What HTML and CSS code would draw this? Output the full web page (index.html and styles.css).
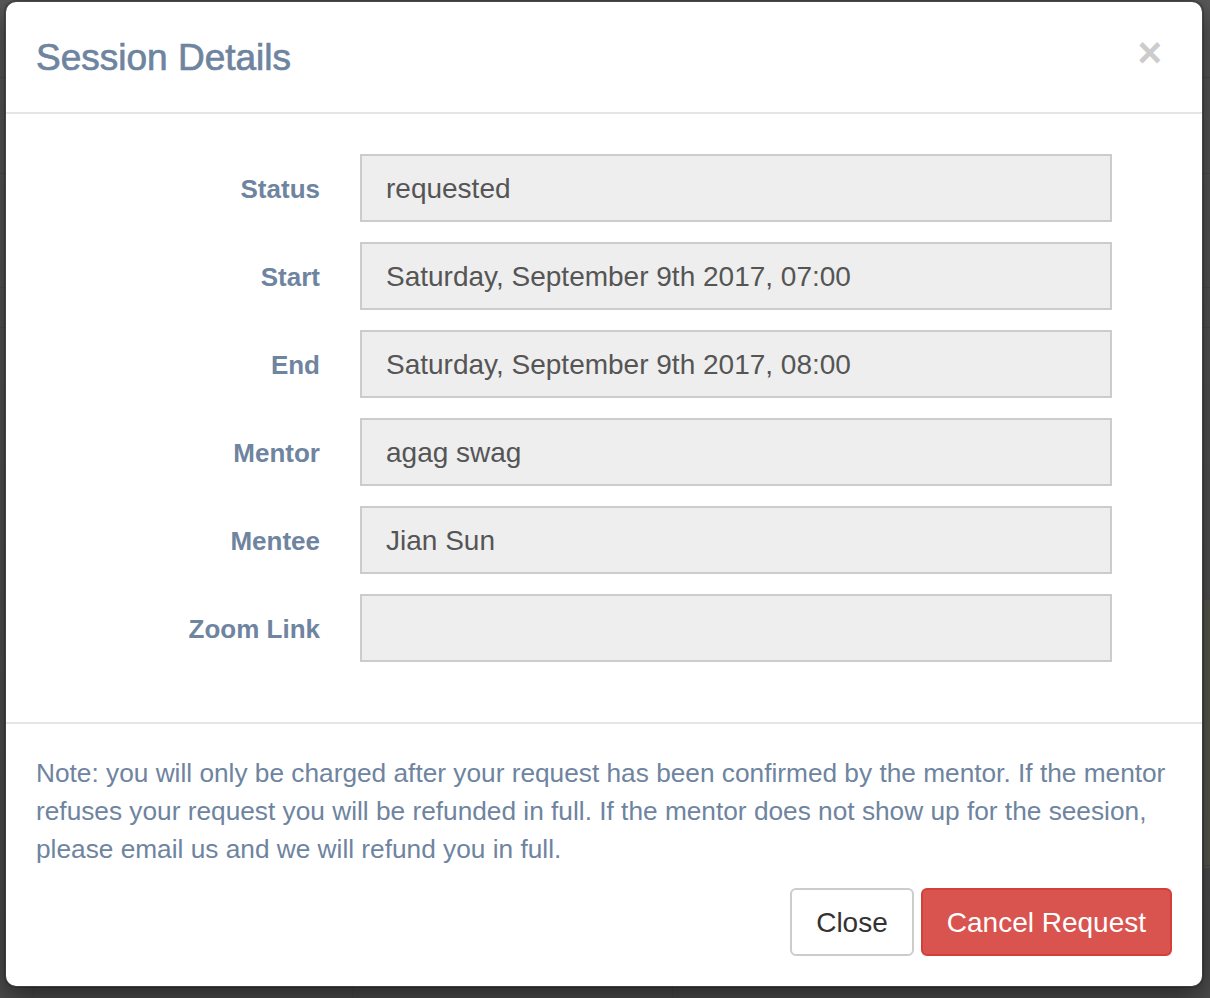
FILE: index.html
```html
<!DOCTYPE html>
<html lang="en">
<head>
<meta charset="utf-8">
<title>Session Details</title>
<link rel="stylesheet" href="styles.css">
</head>
<body>
<div class="modal">
  <div class="modal-header">
    <h4 class="modal-title">Session Details</h4>
    <span class="close">&times;</span>
  </div>
  <div class="modal-body">
    <form class="form">
      <label class="label">Status</label>
      <div class="input">requested</div>
      <label class="label">Start</label>
      <div class="input">Saturday, September 9th 2017, 07:00</div>
      <label class="label">End</label>
      <div class="input">Saturday, September 9th 2017, 08:00</div>
      <label class="label">Mentor</label>
      <div class="input">agag swag</div>
      <label class="label">Mentee</label>
      <div class="input">Jian Sun</div>
      <label class="label">Zoom Link</label>
      <div class="input"></div>
    </form>
  </div>
  <div class="modal-footer">
    <p class="note">Note: you will only be charged after your request has been confirmed by the mentor. If the mentor refuses your request you will be refunded in full. If the mentor does not show up for the seesion, please email us and we will refund you in full.</p>
    <div class="actions">
      <button class="btn btn-default" type="button">Close</button>
      <button class="btn btn-danger" type="button">Cancel Request</button>
    </div>
  </div>
</div>
</body>
</html>
```

FILE: styles.css
```css
* { box-sizing: border-box; }

html, body {
  margin: 0;
  padding: 0;
  height: 998px;
  overflow: hidden;
}

body {
  font-family: "Liberation Sans", Arial, Helvetica, sans-serif;
  background-color: #5a5a5a;
  background-image:
    linear-gradient(#505050, #505050),
    linear-gradient(#505050, #505050),
    linear-gradient(#505050, #505050),
    linear-gradient(#505050, #505050),
    linear-gradient(#505050, #505050),
    linear-gradient(#505050, #505050),
    linear-gradient(#4a4a4a, #4a4a4a),
    linear-gradient(#4a4a4a, #4a4a4a),
    linear-gradient(#4a4a4a, #4a4a4a),
    linear-gradient(#5b5b52, #5b5b52),
    linear-gradient(#5a5a5a, #4e4e4e);
  background-position:
    0 77px, 0 173px, 0 287px, 0 327px, 0 598px, 0 865px,
    33px 986px, 352px 986px, 672px 986px,
    1204px 600px, 0 0;
  background-size:
    100% 1px, 100% 1px, 100% 1px, 100% 1px, 100% 1px, 100% 1px,
    1px 12px, 1px 12px, 1px 12px,
    6px 268px, 100% 100%;
  background-repeat: no-repeat;
}

.modal {
  width: 1200px;
  margin-left: 4px;
  background: #fff;
  background-clip: padding-box;
  border: 2px solid rgba(0, 0, 0, 0.2);
  border-radius: 12px;
  box-shadow: 0 10px 30px rgba(0, 0, 0, 0.5);
}

.modal-header {
  display: flex;
  justify-content: space-between;
  align-items: flex-start;
  height: 112px;
  padding: 30px 40px 30px 30px;
  border-bottom: 2px solid #e5e5e5;
}

.modal-title {
  margin: 0;
  font-size: 37px;
  line-height: 52px;
  font-weight: 400;
  color: #6e849f;
  -webkit-text-stroke: 0.7px #6e849f;
}

.close {
  font-size: 42px;
  line-height: 42px;
  font-weight: 700;
  color: #cccccc;
  margin-top: 0;
}

.modal-body {
  padding: 40px 30px 60px 30px;
  border-bottom: 2px solid #e5e5e5;
}

.form {
  display: grid;
  grid-template-columns: 284px 752px;
  column-gap: 40px;
  row-gap: 20px;
  align-items: center;
  margin: 0;
}

.label {
  text-align: right;
  font-size: 26px;
  line-height: 38px;
  padding-top: 2px;
  font-weight: 700;
  color: #6e849f;
}

.input {
  height: 68px;
  padding: 13px 24px 11px 24px;
  font-size: 28px;
  line-height: 40px;
  color: #555555;
  background: #eeeeee;
  border: 2px solid #cccccc;
  border-radius: 0;
}

.modal-footer {
  padding: 30px 30px 30px 30px;
}

.note {
  margin: 0;
  font-size: 26.25px;
  line-height: 38px;
  color: #6e849f;
}

.actions {
  display: flex;
  justify-content: flex-end;
  gap: 7px;
  margin-top: 20px;
}

.btn {
  font-family: "Liberation Sans", Arial, Helvetica, sans-serif;
  font-size: 28px;
  line-height: 40px;
  padding: 13px 24px 11px 24px;
  border: 2px solid;
  border-radius: 6px;
  cursor: pointer;
}

.btn-default {
  color: #333333;
  background: #ffffff;
  border-color: #cccccc;
}

.btn-danger {
  color: #ffffff;
  background: #d9534f;
  border-color: #d43f3a;
}
```
